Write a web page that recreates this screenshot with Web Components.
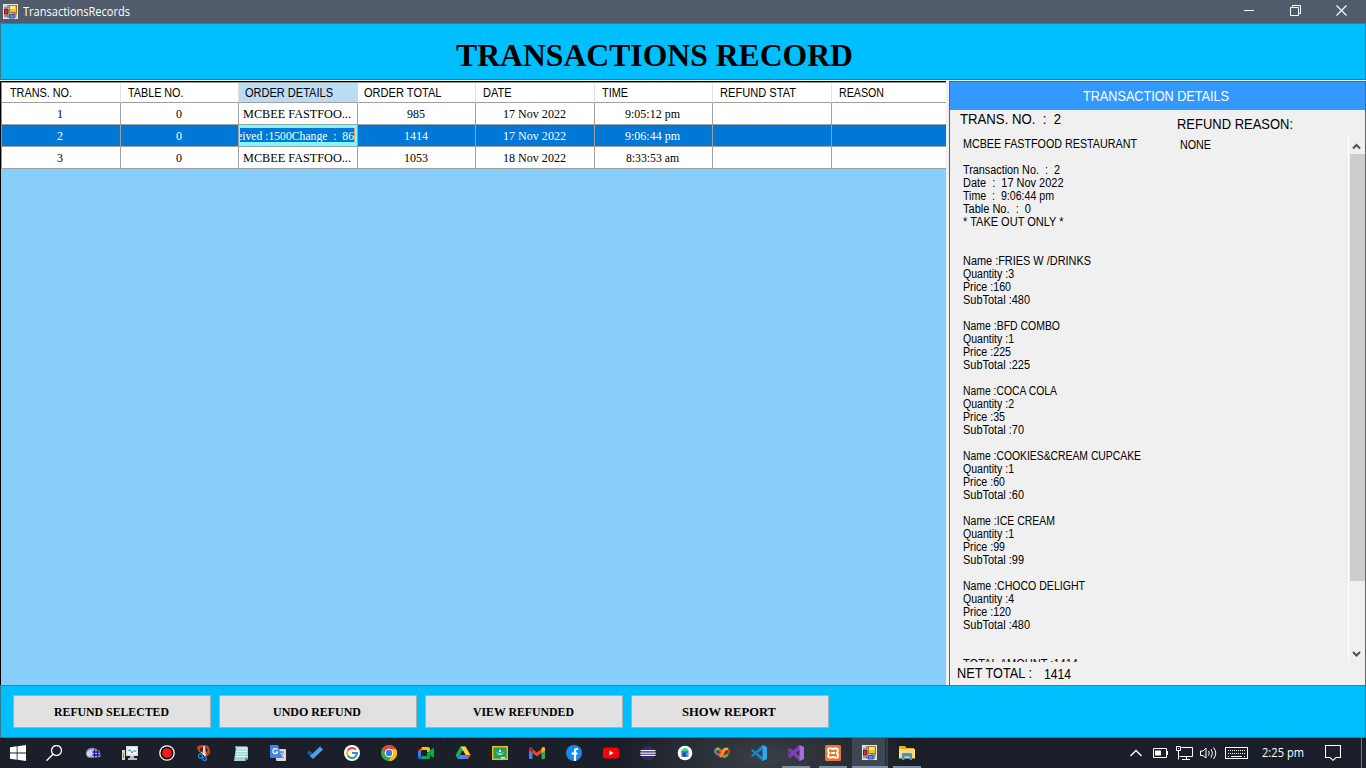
<!DOCTYPE html>
<html lang="en">
<head>
<meta charset="utf-8">
<title>TransactionsRecords</title>
<style>
html,body{margin:0;height:100%;overflow:hidden;background:#1a1f29}
body{font-family:"Liberation Sans",Arial,sans-serif}
</style>
</head>
<body>
<app-window></app-window>
<script>
const define=(name,html,setup)=>customElements.define(name,class extends HTMLElement{
  connectedCallback(){
    if(this.shadowRoot)return;
    const t=document.createElement('template');
    t.innerHTML=typeof html==='function'?html(this):html;
    this.attachShadow({mode:'open'}).append(t.content.cloneNode(true));
    if(setup)setup(this,this.shadowRoot);
  }
});

/* Text run condensed or widened to a set width (attribute w) */
define('fit-text','<style>:host{display:inline-block;white-space:pre;text-align:left;vertical-align:top}span{display:inline-block;transform-origin:0 50%}</style><span><slot></slot></span>',(el,root)=>{
  const s=root.querySelector('span'),w=parseFloat(el.getAttribute('w'));
  if(!w)return;
  const n=s.offsetWidth&&s.getBoundingClientRect().width;
  if(n){s.style.transform=`scaleX(${w/n})`;el.style.width=w+'px';s.style.width=n+'px';}
});

const ICONS={
form:'<rect x=".5" y=".5" width="14" height="14" fill="#c9ccd2" stroke="#e6e6e6"/><path d="M1 4h4M1 12h4M5 1v3M5 11v3M12 11v3M9 10h5" stroke="#555b66"/><rect x="6.500" y="1.500" width="7" height="7" fill="#f2c22c" stroke="#a8790c"/><path d="M7 2h5v3H7z" fill="#ffe893"/><rect x="1.500" y="5.500" width="3.500" height="4.500" fill="#d3312b" stroke="#7d1512"/><rect x="6.500" y="10.500" width="4.500" height="3.500" fill="#5b8de0" stroke="#2f55a8"/>',
start:'<path d="M0 2.300 6.700 1.300V7.600H0zM7.500 1.200 16 0V7.600H7.500zM0 8.400H6.700V14.700L0 13.700zM7.500 8.400H16V16L7.500 14.800z" fill="#fff"/>',
search:'<circle cx="10.500" cy="5.500" r="5" fill="none" stroke="#fff" stroke-width="1.300"/><path d="M7 9.200.500 15.700" stroke="#fff" stroke-width="1.400"/>',
shell:'<path d="M1 7Q3 2 9 3L15 6 15.500 12 5 13Q0 12 1 7" fill="#8d8fc0"/><path d="M1.500 8Q4 4 7 5V11L3 12z" fill="#d2d2ec"/><path d="M7 4 14 6V12L7 12z" fill="#c7c9ef"/><path d="M9.500 4.500V12M12.500 5V12M7.500 7H14.500M7.500 10H14.500" stroke="#1616a0" stroke-width="1.300"/>',
monitor:'<rect x="4" y="1" width="12" height="10" fill="#d9dcd6"/><rect x="5.500" y="2.500" width="9" height="7" fill="#fafdfe"/><path d="M6 6 8 4.500 10 8 12 5.500 14 6.500" stroke="#3385b8" fill="none"/><path d="M8 11h4v2h3v2H6v-2h2z" fill="#b9bbb5"/><path d="M0 5H3V15H0z" fill="#d7d6cb"/><path d="M1 8h1v5H1z" fill="#6c9c51"/>',
record:'<circle cx="8" cy="8" r="7.200" fill="#160c0e" stroke="#fff" stroke-width="1.300"/><circle cx="8" cy="8" r="4.800" fill="#f31b20"/>',
snip:'<path d="M2 1Q8-1 12 1 15 4 13.500 9L10 12 8 9 3 7Q0 3 2 1" fill="#d44317"/><path d="M4 3 8 2V8L4 6zM10 2 12 5 10 8z" fill="#551f17"/><path d="M8 1 9.500 11 7 9zM5 7 9 11" stroke="#dce1e4" fill="#dce1e4"/><circle cx="4.500" cy="11" r="2" fill="none" stroke="#1689cf" stroke-width="1.400"/><circle cx="8.500" cy="13.700" r="1.800" fill="none" stroke="#1689cf" stroke-width="1.400"/>',
notepad:'<path d="M3 2H15V14L12 16H1z" fill="#a5d4dc"/><path d="M3.500 4H14M3 6.500H14M3 9H13.500M2.500 11.500H13" stroke="#e6fafb"/><path d="M3 1V3M5 1V3M7 1V3M9 1V3M11 1V3M13 1V3" stroke="#eef4f5"/><path d="M12 16V13H15z" fill="#538b9d"/>',
translate:'<rect x="6" y="4" width="10" height="12" rx="1" fill="#d7dbe1"/><path d="M8 7h6M11 6v2M9 8Q10 12 14 13M13 8Q12 12 8 13" stroke="#6d7e91" fill="none"/><path d="M1 0H8L12 13H1Q0 13 0 12V1Q0 0 1 0" fill="#4380e8"/><path d="M7.500 4.800A2.500 2.500 0 1 0 7.700 7H5.500" fill="none" stroke="#fff" stroke-width="1.200"/>',
todo:'<path d="M0 8 2.500 5.500 7 10 5 13z" fill="#185abd"/><path d="M3 11 13 1.500 16 4.500 6 14z" fill="#4aa3ee"/>',
google:'<circle cx="8" cy="8" r="8" fill="#fff"/><path d="M11.800 4.600A5 5 0 0 0 3.700 5.600" fill="none" stroke="#ea4335" stroke-width="2"/><path d="M3.700 5.600A5 5 0 0 0 3.700 10.400" fill="none" stroke="#fbbc05" stroke-width="2"/><path d="M3.700 10.400A5 5 0 0 0 11.400 11.700" fill="none" stroke="#34a853" stroke-width="2"/><path d="M8 8H13Q13 10 11.400 11.700" fill="none" stroke="#4285f4" stroke-width="2"/>',
chrome:'<circle cx="8" cy="8" r="8" fill="#34a853"/><path d="M1.100 4A8 8 0 0 1 15 4H8L5 9.500z" fill="#ea4335"/><path d="M15 4A8 8 0 0 1 7.500 16L11.500 9.500 10 4z" fill="#fbbc05"/><circle cx="8" cy="8" r="4.300" fill="#fff"/><circle cx="8" cy="8" r="3.200" fill="#337be9"/>',
meet:'<path d="M0 6 4 2V6z" fill="#ea4335"/><path d="M4 2H10Q12 2 12 4V7H9V5H4z" fill="#fbbc04"/><path d="M0 6H3V11H0z" fill="#2684fc"/><path d="M0 11H4V14H1Q0 14 0 13z" fill="#1769e0"/><path d="M4 11H9V8L15 3Q16 3 16 4V12Q16 14 12 10V13Q12 14 11 14H4z" fill="#00ac47"/>',
drive:'<path d="M5.500 1.500H10L5 10 2.700 14 .500 10z" fill="#20a464"/><path d="M5.500 1.500H10.500L15.500 10H10.700z" fill="#ffcf48"/><path d="M5 10H15.500L13 14H2.700z" fill="#4688f1"/><path d="M8 6 10.400 10H5.600z" fill="#1b202a"/><path d="M10.700 10H15.500L13 14z" fill="#e84235"/>',
classroom:'<rect x=".7" y="1.700" width="14.600" height="12.600" fill="#1ea261" stroke="#f1b71d" stroke-width="1.500"/><circle cx="8" cy="6" r="1.200" fill="#fff"/><path d="M5 9.500Q8 7 11 9.500z" fill="#fff"/><circle cx="5" cy="7.500" r=".8" fill="#82cca7"/><circle cx="11" cy="7.500" r=".8" fill="#82cca7"/><path d="M9 12h4v1.500H9z" fill="#e7f3ed"/>',
gmail:'<path d="M0 4H3.500V14H1Q0 14 0 13z" fill="#4285f4"/><path d="M12.500 4H16V13Q16 14 15 14H12.500z" fill="#34a853"/><path d="M3.500 4 8 7.500 12.500 4V8L8 11.500 3.500 8z" fill="#ea4335"/><path d="M0 3Q1 1 3.500 3V8L0 5.500z" fill="#c5221f"/><path d="M16 3Q15 1 12.500 3V8L16 5.500z" fill="#fbbc04"/>',
facebook:'<circle cx="8" cy="8" r="8" fill="#1788ee"/><path d="M12 4H10.500Q9 4 9 5.500V16M5.500 8.500H11.500" stroke="#fff" stroke-width="2.200" fill="none"/>',
youtube:'<rect y="2.500" width="16" height="11" rx="2.500" fill="#f00"/><path d="M6.500 5.500 10.500 8 6.500 10.500z" fill="#fff"/>',
eclipse:'<circle cx="8" cy="8" r="7.300" fill="#342c61"/><path d="M.5 5.700H15.500M.2 8H15.800M.5 10.300H15.500" stroke="#f2effa" stroke-width="1.250"/>',
android:'<circle cx="8" cy="8" r="7.300" fill="#fff"/><path d="M4.500 6.500A3.500 3.500 0 0 1 11.500 6.500z" fill="#3ddc84"/><path d="M4 6H11.500V11.500L9 12H4.500z" fill="#3e87cc"/><path d="M6 11.500V7.500H10.500V11" fill="#164d84"/><circle cx="10" cy="9" r="1.500" fill="#42a5f5"/>',
butterfly:'<g fill="none" stroke-width="2.600"><path d="M8 7.500Q5 2.500 2 4.500" stroke="#8ac13e"/><path d="M2 4.500Q0 7 3 8.500" stroke="#3f8fd6"/><path d="M3 8.500Q5 11 8 7.500" stroke="#eb5b25"/><path d="M5 4.500 8 8.500 10.500 11.500" stroke="#e8442a"/><path d="M8 7.500Q11 2.500 14 4.500" stroke="#f4b230"/><path d="M14 4.500Q16 7 13.500 9" stroke="#d5362c"/><path d="M13.500 9Q11 13 8.500 11" stroke="#62ad43"/><path d="M6 12 10.500 5.500" stroke="#ee8b2c"/></g>',
vscode:'<path d="M11.500 0 16 2V14L11.500 16 0 5.500 1.500 4 12 12V4L1.500 12 0 10.500z" fill="#1685ca"/><path d="M11.500 0 16 2V14L11.500 16z" fill="#32a5eb"/>',
vs:'<path d="M11.500 0 16 2V14L11.500 16 0 5V4L2 3 12 11.500V4.500L2 13 0 12V10.500z" fill="#7b43b8"/><path d="M11.500 0 16 2V14L11.500 16z" fill="#a66de0"/><path d="M0 4H1.500V12H0z" fill="#6b3b9e"/>',
xampp:'<rect width="16" height="16" rx="1.500" fill="#e7762e"/><path d="M5 3.500H6.500Q8 3.500 8 5 8 3.500 9.500 3.500H11Q13 3.500 13 5.500T11 8Q13 8 13 10.500T11 12.500H9.500Q8 12.500 8 11 8 12.500 6.500 12.500H5Q3 12.500 3 10.500T5 8Q3 8 3 5.500T5 3.500M6 8H10" stroke="#fff" fill="none" stroke-width="1.800"/>',
folder:'<path d="M0 1H6L7.500 3H15V13H0z" fill="#e8af25"/><path d="M0 4H16V13.500H0z" fill="#ffdb70"/><path d="M3 9Q3 8 4 8H12Q13 8 13 9V15H10.500V11.500H5.500V15H3z" fill="#3898d8"/>'
};
const svg=(k,w=16,h=16)=>`<svg width="${w}" height="${h}" viewBox="0 0 ${w} ${h}">${ICONS[k]}</svg>`;

define('title-bar',`<style>
:host{display:flex;background:#515c6b;color:#fff;font:12px/23px "Open Sans","Noto Sans",sans-serif;border-bottom:1px solid #3f7d92;box-sizing:border-box;height:24px}
.i{width:23px;padding:4px 0 0 3px;box-sizing:border-box;line-height:0}.c{margin-left:auto;display:flex;padding-right:2px}.c span{width:46px;display:grid;place-items:center;height:21px}.c svg{display:block}
fit-text{height:23px}</style>
<span class="i">${svg('form',15,15)}</span><fit-text w="107">TransactionsRecords</fit-text>
<div class="c"><span><svg width="10" height="11"><path d="M0 5.500H10" stroke="#fff"/></svg></span><span><svg width="11" height="11"><path d="M.5 2.500H8.500V10.500H.5zM2.500 2V.5H10.500V8.500H9" fill="none" stroke="#fff"/></svg></span><span><svg width="11" height="11"><path d="M.5.5 10.500 10.500M10.500.5.5 10.500" stroke="#fff" stroke-width="1.150"/></svg></span></div>`);

define('page-banner',`<style>:host{display:block;height:56px;box-sizing:border-box;background:#00bfff;border:1px solid #37788d;border-top:0;padding-left:455px;font:bold 32px/63px "Liberation Serif","Times New Roman",serif;color:#000}</style><fit-text w="397"><slot></slot></fit-text>`);

const COLS=[['TRANS. NO.',62],['TABLE NO.',55.5],['ORDER DETAILS',88],['ORDER TOTAL',77.5],['DATE',28.500],['TIME',26],['REFUND STAT',76],['REASON',45]];
const LONG='MCBEE FASTFOO...';
const ROWS=[['1','0',LONG,'985','17 Nov 2022','9:05:12 pm','',''],['2','0','*','1414','17 Nov 2022','9:06:44 pm','',''],['3','0',LONG,'1053','18 Nov 2022','8:33:53 am','','']];
const cellWidth={[LONG]:108,'17 Nov 2022':63,'18 Nov 2022':63,'9:05:12 pm':55,'9:06:44 pm':55,'8:33:53 am':53};
const cell=t=>t==='*'?'<div class="edit"><p><fit-text w="117">eived :1500Change  :  86</fit-text></p></div>':`<div>${t?`<fit-text w="${cellWidth[t]||t.length*6}">${t}</fit-text>`:''}</div>`;
define('data-grid',`<style>
:host{display:block;background:#87cefa;border:solid #000;border-width:1px 0 0 1px;box-sizing:border-box}
.t{border-left:1px solid #8f9296;border-top:1px solid #9a9a9a}
.r{display:grid;grid-template-columns:119px 118px 119px 118px 119px 118px 119px 1fr;height:22px;background:#fff;font:13px/22px "Liberation Serif","Times New Roman",serif;color:#000}
.r>div{border-right:1px solid #a0a0a0;border-bottom:1px solid #a0a0a0;text-align:center;overflow:hidden;box-sizing:border-box;padding-right:2px}
.r>div:last-child{border-right:0}.r.h{height:20px;font:12px/21px "Liberation Sans",Arial,sans-serif}
.h>div{text-align:left;padding:0 0 0 8px;border-right-color:#e2e2e2}.h>div:nth-child(n+2){padding-left:7px}.h>div:nth-child(n+3):nth-child(-n+4){padding-left:6px}.h>div:nth-child(3){background:#bcdcf4;border-right-color:#bcdcf4}
.sel{background:#0078d7;color:#fff}.r>.edit{background:#7df9ff;padding:3px 2px 0 1px}
p{margin:0;height:14px;background:#0078d7;line-height:16px;overflow:hidden;border-right:1px solid #d8a95c;display:flex;justify-content:flex-end}
</style><div class="t"><div class="r h">${COLS.map(c=>`<div><fit-text w="${c[1]}">${c[0]}</fit-text></div>`).join('')}</div>${ROWS.map((r,i)=>`<div class="r${i===1?' sel':''}">${r.map(cell).join('')}</div>`).join('')}</div>`);

const LINES=[['MCBEE FASTFOOD RESTAURANT',174],0,['Transaction No.  :  2',97],['Date  :  17 Nov 2022',100.5],['Time  :  9:06:44 pm',91],['Table No.  :  0',68],['* TAKE OUT ONLY *',100.5],0,0];
const item=(n,w,q,p,s)=>LINES.push(['Name :'+n,w],['Quantity :'+q,51],['Price :'+p,p.length>2?48:42],['SubTotal :'+s,s.length>2?67:61],0);
item('FRIES W /DRINKS',128,'3','160','480');item('BFD COMBO',97,'1','225','225');item('COCA COLA',94,'2','35','70');item('COOKIES&amp;CREAM CUPCAKE',178,'1','60','60');item('ICE CREAM',92,'1','99','99');item('CHOCO DELIGHT',122,'4','120','480');
LINES.push(0,['TOTAL AMOUNT :1414',115]);

define('details-panel',`<style>
:host{display:flex;flex-direction:column;box-sizing:border-box;background:#f0f0f0;border:1px solid #646464;color:#000}
h2{margin:0;height:28px;background:#39f;color:#fff;font:14px/29px "Liberation Sans",Arial,sans-serif;text-align:center;padding-right:3px}
.top{display:grid;grid-template-columns:217px 1fr;height:27px;padding-left:10px;font:14px/19px "Liberation Sans",Arial,sans-serif}
.top fit-text+fit-text{padding-top:5px}
.body{display:grid;grid-template-columns:217px 1fr 17px;height:525px;padding-left:13px;font:12px/13px "Liberation Sans",Arial,sans-serif;overflow:hidden}
.body>*{min-height:0}
.list{overflow:hidden;padding-top:1px}.list div{height:13px}.reason{padding-top:2px}
.net{display:flex;gap:12px;font:14px/21px "Liberation Sans",Arial,sans-serif;padding:1px 0 0 7px}
.net fit-text+fit-text{padding-top:1px}
.sb{display:flex;flex-direction:column;border-left:1px solid #fff;align-items:center}.sb i{background:#cdcdcd;width:15px;height:427px}.sb svg{height:17px;flex:none;margin-right:2px}.sb svg:last-child{margin-top:auto}
</style><h2><fit-text w="146">TRANSACTION DETAILS</fit-text></h2>
<div class="top"><fit-text w="101">TRANS. NO.  :  2</fit-text><fit-text w="116">REFUND REASON:</fit-text></div>
<div class="body"><div class="list">${LINES.map(l=>`<div>${l?`<fit-text w="${l[1]}">${l[0]}</fit-text>`:''}</div>`).join('')}</div><div class="reason"><fit-text w="31">NONE</fit-text></div>
<div class="sb"><svg width="9" height="17"><path d="M1 11.500 4.500 8 8 11.500" fill="none" stroke="#505050" stroke-width="2"/></svg><i></i><svg width="9" height="17"><path d="M1 7 4.500 10.500 8 7" fill="none" stroke="#505050" stroke-width="2"/></svg></div></div>
<div class="net"><fit-text w="75">NET TOTAL :</fit-text><fit-text w="27">1414</fit-text></div>`);

define('action-button',el=>`<style>:host{display:grid;place-items:center;width:198px;height:33px;box-sizing:border-box;background:#e1e1e1;border:1px solid #adadad;padding-right:2px;font:bold 13px/31px "Liberation Serif","Times New Roman",serif;color:#000}</style><fit-text w="${el.getAttribute('w')}"><slot></slot></fit-text>`);
define('action-bar',`<style>:host{display:flex;gap:8px;height:53px;box-sizing:border-box;background:#00bfff;border:1px solid #37788d;border-top-color:#50788c;padding:9px 0 0 12px}</style>
<action-button w="115">REFUND SELECTED</action-button><action-button w="88">UNDO REFUND</action-button><action-button w="101">VIEW REFUNDED</action-button><action-button w="94">SHOW REPORT</action-button>`);

const APPS=['start','search','shell','monitor','record','snip','notepad','translate','todo','google','chrome','meet','drive','classroom','gmail','facebook','youtube','eclipse','android','butterfly','vscode','vs','xampp','form','folder'];
define('task-bar',`<style>
:host{display:flex;height:30px;background:radial-gradient(ellipse 150px 60px at 765px 20px,#3b4046,#1a1f29 95%) #1a1f29;color:#fff;font:12px/30px "Open Sans","Noto Sans",sans-serif}
.a{display:flex;gap:1px;padding-left:1px}.a span{width:36px;height:30px;box-sizing:border-box;display:grid;justify-content:center;padding-top:7px;background:linear-gradient(#7c8da8,#7c8da8) no-repeat 50% 28px/0 2px}
.a span:nth-child(1){padding-right:2px}.a span:nth-child(2){padding-right:4px}.a .run{background-size:28px 2px}.a .act{background:linear-gradient(#7c8da8,#7c8da8) no-repeat 0 28px/100% 2px,linear-gradient(90deg,#3e4754 33px,#252b34 33px,#252b34 34px,#343c48 34px)}
.tray{margin-left:auto;display:flex;align-items:center;height:30px}svg{display:block;flex:none}.tray>svg{margin-right:var(--g,0)}.clock{margin-right:21px;height:30px}.end{width:4px;height:30px;border-left:1px solid #737980}
</style><div class="a">${APPS.map(k=>`<span class="${k==='form'?'act':/^(vs|xampp|folder)$/.test(k)?'run':''}">${svg(k)}</span>`).join('')}</div>
<div class="tray">
<svg width="12" height="8" style="--g:11px"><path d="M.5 7 6 1.500 11.500 7" stroke="#fff" stroke-width="1.300" fill="none"/></svg>
<svg width="15" height="10" style="--g:8px"><path d="M.5.500H13.500V9.500H.500zM14.500 3V7" stroke="#fff" fill="none"/><path d="M2 2.500H8V7.500H2z" fill="#fff"/></svg>
<svg width="17" height="14" style="--g:7px"><path d="M5.500 1.500H16.500V10.500H3.500M10.500 10.500V13M6 13.500H14M.500 .500H4.500V4.500H.500zM2.500 5V13.500" stroke="#fff" fill="none"/><path d="M2 2h1v1H2z" fill="#fff"/></svg>
<svg width="17" height="14" style="--g:8px"><path d="M.5 5H3L6 2V12L3 9.500H.500zM8.500 5Q10 7 8.500 9.500M11 3Q14 7 11 11.500M13.500 1.500Q18 7 13.500 13" stroke="#fff" fill="none"/></svg>
<svg width="23" height="14" style="--g:14px"><rect x=".5" y="1.500" width="22" height="11" fill="none" stroke="#fff"/><path d="M3 4.500H21M3 7.500H21" stroke="#fff" stroke-dasharray="1 1"/><path d="M3 10.500H4M6 10.500H17M19 10.500H20" stroke="#fff"/></svg>
<fit-text class="clock" w="42">2:25 pm</fit-text>
<svg width="16" height="16" style="--g:20px"><path d="M.500.500H15.500V12.500H11L8 15.300 5 12.500H.500z" stroke="#fff" fill="none" stroke-width="1.100"/></svg><div class="end"></div></div>`);

define('app-window',`<style>
:host{display:grid;grid-template-rows:24px 56px 605px 53px 30px;width:1366px;height:768px;background:#f0f0f0}
main{display:grid;grid-template-columns:946px 417px;gap:3px;padding-top:1px;background:#f0f0f0}
</style><title-bar></title-bar><page-banner>TRANSACTIONS RECORD</page-banner><main><data-grid></data-grid><details-panel></details-panel></main><action-bar></action-bar><task-bar></task-bar>`);
</script>
</body>
</html>
